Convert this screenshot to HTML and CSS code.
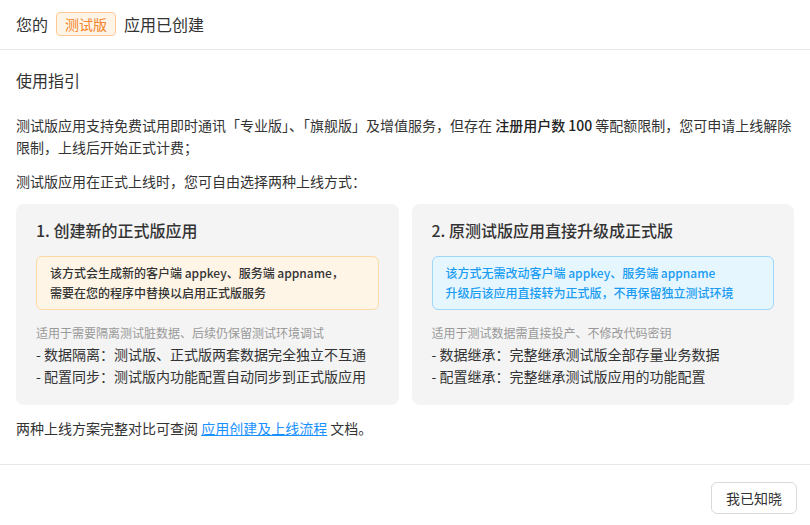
FILE: index.html
```html
<!DOCTYPE html>
<html lang="zh-CN">
<head>
    <meta charset="UTF-8">
    <meta name="viewport" content="width=device-width, initial-scale=1.0">
    <title>应用已创建</title>
    <link rel="stylesheet" href="styles.css">
</head>
<body>
    <div class="dialog">
        <header class="dialog-header">
            <span>您的</span>
            <span class="badge">测试版</span>
            <span>应用已创建</span>
        </header>

        <main class="dialog-body">
            <h2 class="section-title">使用指引</h2>
            <p class="text">测试版应用支持免费试用即时通讯「专业版」、「旗舰版」及增值服务，但存在 <strong>注册用户数 100</strong> 等配额限制，您可申请上线解除限制，上线后开始正式计费；</p>
            <p class="text">测试版应用在正式上线时，您可自由选择两种上线方式：</p>

            <div class="options">
                <div class="card">
                    <h3 class="card-title">1. 创建新的正式版应用</h3>
                    <div class="notice notice-warn">
                        该方式会生成新的客户端 appkey、服务端 appname，<br>
                        需要在您的程序中替换以启用正式版服务
                    </div>
                    <div class="hint">适用于需要隔离测试脏数据、后续仍保留测试环境调试</div>
                    <div class="item">- 数据隔离：测试版、正式版两套数据完全独立不互通</div>
                    <div class="item">- 配置同步：测试版内功能配置自动同步到正式版应用</div>
                </div>
                <div class="card">
                    <h3 class="card-title">2. 原测试版应用直接升级成正式版</h3>
                    <div class="notice notice-info">
                        该方式无需改动客户端 appkey、服务端 appname<br>
                        升级后该应用直接转为正式版，不再保留独立测试环境
                    </div>
                    <div class="hint">适用于测试数据需直接投产、不修改代码密钥</div>
                    <div class="item">- 数据继承：完整继承测试版全部存量业务数据</div>
                    <div class="item">- 配置继承：完整继承测试版应用的功能配置</div>
                </div>
            </div>

            <p class="text footnote">两种上线方案完整对比可查阅 <a href="#" class="link">应用创建及上线流程</a> 文档。</p>
        </main>

        <footer class="dialog-footer">
            <button type="button" class="btn">我已知晓</button>
        </footer>
    </div>
</body>
</html>
```

FILE: styles.css
```css
body {
    margin: 0;
    padding: 0;
    background: #fff;
    color: #333;
    font-family: "Noto Sans CJK SC", "Noto Sans", sans-serif;
    font-size: 14px;
}

.dialog {
    width: 810px;
}

.dialog-header {
    display: flex;
    align-items: center;
    gap: 8px;
    height: 50px;
    padding: 0 16px 2px;
    box-sizing: border-box;
    border-bottom: 1px solid #e8e8e8;
    font-size: 16px;
    color: #333;
}

.badge {
    display: inline-block;
    height: 24px;
    line-height: 22px;
    padding: 0 8px;
    box-sizing: border-box;
    font-size: 14px;
    color: #f5852a;
    background: #fff4e6;
    border: 1px solid #ffc995;
    border-radius: 4px;
}

.dialog-body {
    padding: 18px 16px 25px;
}

.section-title {
    margin: 0 0 22px;
    font-size: 16px;
    font-weight: 400;
    line-height: 24px;
}

.text {
    margin: 0 0 12px;
    line-height: 22px;
}

.text strong {
    font-weight: 500;
    color: #222;
}

.options {
    display: grid;
    grid-template-columns: 1fr 1fr;
    gap: 13px;
    margin-bottom: 12px;
}

.card {
    background: #f4f4f4;
    border-radius: 8px;
    padding: 14px 20px 18px;
}

.card-title {
    margin: 0 0 14px;
    font-size: 16px;
    font-weight: 500;
    line-height: 24px;
}

.notice {
    padding: 6px 13px;
    border-radius: 6px;
    font-size: 12px;
    font-weight: 500;
    line-height: 20px;
    margin-bottom: 14px;
}

.notice-warn {
    background: #fef5e6;
    border: 1px solid #fcd9a5;
    color: #333;
}

.notice-info {
    background: #e6f6ff;
    border: 1px solid #9fd8fb;
    color: #1a9cf2;
}

.hint {
    font-size: 12px;
    color: #999;
    line-height: 18px;
    margin-bottom: 1px;
}

.item {
    line-height: 22px;
}

.footnote {
    margin: 0;
}

.link {
    color: #1890ff;
    text-decoration: underline;
}

.dialog-footer {
    display: flex;
    justify-content: flex-end;
    padding: 17px 13px 13px;
    border-top: 1px solid #e8e8e8;
}

.btn {
    height: 32px;
    padding: 0 14px;
    font-family: inherit;
    font-size: 14px;
    color: #333;
    background: #fff;
    border: 1px solid #d9d9d9;
    border-radius: 6px;
    cursor: pointer;
}
```
